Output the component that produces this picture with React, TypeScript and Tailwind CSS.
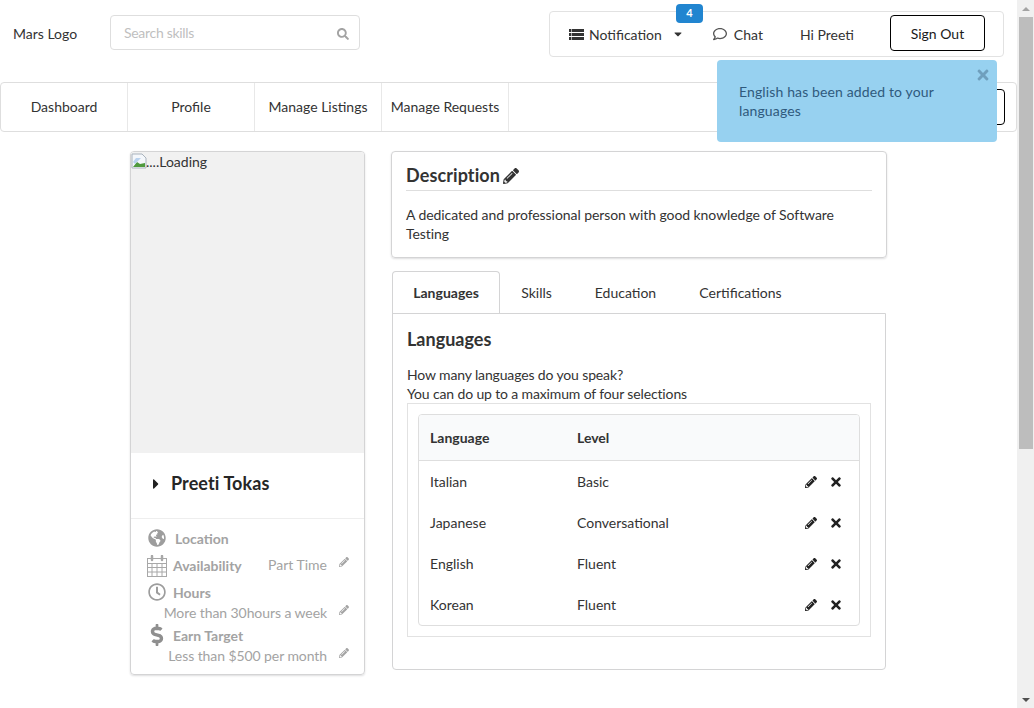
import {
  FaCaretDown,
  FaCaretRight,
  FaDollarSign,
  FaGlobeAmericas,
  FaPencilAlt,
  FaRegClock,
  FaRegComment,
  FaSearch,
  FaTimes,
} from 'react-icons/fa'

const languages = [
  { name: 'Italian', level: 'Basic' },
  { name: 'Japanese', level: 'Conversational' },
  { name: 'English', level: 'Fluent' },
  { name: 'Korean', level: 'Fluent' },
]

function ListIcon() {
  return (
    <svg width="15" height="11" viewBox="0 0 15 11" fill="#333" className="ml-[19px] shrink-0">
      <path d="M0 0h2.4v3H0zM3 0h12v3H3zM0 4h2.4v3H0zM3 4h12v3H3zM0 8h2.4v3H0zM3 8h12v3H3z" />
    </svg>
  )
}

function CalendarIcon() {
  return (
    <svg width="20" height="22" viewBox="0 0 20 22" fill="none" stroke="#a8a8a8" className="mt-[2px] shrink-0">
      <rect x="0.5" y="3.5" width="19" height="18" />
      <path d="M0 8.5h20M0 12.5h20M0 17h20M5 8v14M10 8v14M15 8v14" />
      <path d="M5 1v4M15 1v4" strokeWidth="2.5" strokeLinecap="round" />
    </svg>
  )
}

function Header() {
  return (
    <div className="flex h-[82px] items-start">
      <div className="ml-[13px] mt-[25px] w-[97px] leading-[18px]">Mars Logo</div>
      <div className="mt-[15px] flex h-[35px] w-[250px] items-center justify-between rounded border border-[#dedede] pl-[13px] pr-[10px]">
        <span className="tracking-[-0.3px] text-[#bfbfbf]">Search skills</span>
        <FaSearch className="mt-0.5 text-[12px] text-[#a3a3a3]" />
      </div>
      <div className="relative ml-[189px] mt-[11px] flex h-[46px] w-[455px] items-center rounded border border-[#e2e2e2]">
        <span className="absolute left-[126px] -top-[8px] flex h-[19px] w-[27px] items-center justify-center rounded bg-[#2185d0] text-[11px] font-bold text-white">
          4
        </span>
        <ListIcon />
        <span className="ml-[5px]">Notification</span>
        <FaCaretDown className="ml-[10px] text-[12px] text-[#333]" />
        <FaRegComment className="ml-[29px] text-[14px] text-[#555]" />
        <span className="ml-[7px]">Chat</span>
        <span className="ml-[37px]">Hi Preeti</span>
        <button className="mb-[2px] ml-[36px] h-[36px] w-[95px] rounded border border-black text-[#1a1a1a]">
          Sign Out
        </button>
      </div>
    </div>
  )
}

function NavBar() {
  return (
    <div className="relative flex h-[50px] rounded border border-[#dedede]">
      <div className="flex w-[127px] items-center justify-center border-r border-[#e8e8e8] pb-[2px]">Dashboard</div>
      <div className="flex w-[127px] items-center justify-center border-r border-[#e8e8e8] pb-[2px]">Profile</div>
      <div className="flex w-[127px] items-center justify-center border-r border-[#e8e8e8] pb-[2px]">Manage Listings</div>
      <div className="flex w-[127px] items-center justify-center border-r border-[#e8e8e8] pb-[2px]">Manage Requests</div>
      <span className="absolute left-[960px] top-[6px] h-[36px] w-[44px] rounded border border-black" />
    </div>
  )
}

function Toast() {
  return (
    <div className="absolute left-[717px] top-[60px] h-[82px] w-[280px] rounded bg-[#97d1f0] pl-[22px] pr-[40px] pt-[22px] leading-[19px] tracking-[0.13px] text-[#2f5a7d]">
      <FaTimes className="absolute right-[6px] top-[7px] text-[16px] text-[#6f9fbd]" />
      English has been added to your languages
    </div>
  )
}

function ProfileCard() {
  return (
    <div className="h-[524px] w-[235px] shrink-0 overflow-hidden rounded border border-[#d4d4d5] shadow-[0_1px_2px_rgba(34,36,38,0.15)]">
      <div className="flex h-[301px] items-start bg-[#f1f1f1] leading-[19px]">
        <svg width="16" height="16" viewBox="0 0 16 16" className="mt-px shrink-0">
          <path d="M1 1h10l4 4v10H1z" fill="#f4f7fb" stroke="#a9b3bd" />
          <path d="M2 14l4-5 3 2 5-1v4z" fill="#4f9a3e" />
          <path d="M2 9l3-4h5l-6 6z" fill="#b9d2ee" />
        </svg>
        <span className="-ml-px text-[#333]">....Loading</span>
      </div>
      <div className="flex h-[66px] items-center border-b border-[#eee] pb-[4px]">
        <FaCaretRight className="ml-[17px] text-[16px] text-[#222]" />
        <span className="ml-[7px] text-[18px] font-bold tracking-[0.1px] text-[#262626]">Preeti Tokas</span>
      </div>
      <div className="flex flex-col pl-[16px] pr-[15px] pt-[8px] text-[#a3a3a3]">
        <div className="flex h-[22px] items-center">
          <FaGlobeAmericas className="ml-px text-[18px] text-[#9d9d9d]" />
          <span className="ml-[9px] font-bold">Location</span>
        </div>
        <div className="mt-[3px] flex h-[26px] items-center">
          <CalendarIcon />
          <span className="ml-[6px] font-bold">Availability</span>
          <span className="relative -top-px ml-auto">Part Time</span>
          <FaPencilAlt className="relative -top-[3px] ml-[12px] text-[10px]" />
        </div>
        <div className="mt-[3px] flex h-[22px] items-center">
          <FaRegClock className="ml-px text-[18px] text-[#9d9d9d]" />
          <span className="ml-[7px] font-bold">Hours</span>
        </div>
        <div className="flex h-[19px] items-center justify-end">
          <span className="tracking-[-0.08px]">More than 30hours a week</span>
          <FaPencilAlt className="relative -top-[3px] ml-[12px] text-[10px]" />
        </div>
        <div className="mt-[2px] flex h-[22px] items-center">
          <FaDollarSign className="-ml-px text-[22px] text-[#8f8f8f]" />
          <span className="ml-[5px] font-bold">Earn Target</span>
        </div>
        <div className="flex h-[19px] items-center justify-end">
          <span className="tracking-[-0.08px]">Less than $500 per month</span>
          <FaPencilAlt className="relative -top-[3px] ml-[12px] text-[10px]" />
        </div>
      </div>
    </div>
  )
}

function Description() {
  return (
    <div className="h-[107px] rounded border border-[#d4d4d5] px-[14px] shadow-[0_1px_2px_rgba(34,36,38,0.15)]">
      <div className="flex h-[39px] items-center border-b border-[#dedede] pt-[9px]">
        <h3 className="text-[18px] font-bold tracking-[0.1px] text-[#333]">Description</h3>
        <FaPencilAlt className="ml-[3px] text-[16px] text-[#333]" />
      </div>
      <p className="mt-[14px] leading-[19px] tracking-[-0.07px] text-[#333]">
        A dedicated and professional person with good knowledge of Software Testing
      </p>
    </div>
  )
}

function LanguagesTab() {
  return (
    <div className="ml-px mt-[13px] w-[494px]">
      <div className="flex h-[43px] items-stretch">
        <div className="relative z-10 flex h-[43px] w-[108px] items-center justify-center rounded-t border border-b-0 border-[#d4d4d5] pb-[2px] font-bold text-[#333]">
          Languages
        </div>
        <div className="flex w-[73px] items-center justify-center text-[#333]">Skills</div>
        <div className="flex w-[105px] items-center justify-center text-[#333]">Education</div>
        <div className="flex w-[125px] items-center justify-center text-[#333]">Certifications</div>
      </div>
      <div className="-mt-px h-[357px] rounded-b border border-[#d4d4d5] px-[14px] pt-[14px]">
        <h3 className="text-[18px] font-bold leading-[22px] text-[#333]">Languages</h3>
        <p className="mt-[15px] leading-[19px] tracking-[-0.14px] text-[#333]">
          How many languages do you speak?
          <br />
          You can do up to a maximum of four selections
        </p>
        <div className="h-[234px] border border-[#e2e2e2] px-[10px] pt-[10px]">
          <div className="h-[212px] overflow-hidden rounded border border-[#dedede]">
            <div className="flex h-[46px] items-center border-b border-[#dedede] bg-[#f9fafb] font-bold text-[#333]">
              <span className="ml-[11px] w-[147px]">Language</span>
              <span>Level</span>
            </div>
            {languages.map((row) => (
              <div key={row.name} className="flex h-[41px] items-center text-[#333]">
                <span className="ml-[11px] w-[147px]">{row.name}</span>
                <span>{row.level}</span>
                <FaPencilAlt className="ml-auto text-[12px] text-[#222]" />
                <FaTimes className="ml-[12px] mr-[16px] text-[14px] text-[#222]" />
              </div>
            ))}
          </div>
        </div>
      </div>
    </div>
  )
}

function Scrollbar() {
  return (
    <div className="flex h-[708px] w-[17px] shrink-0 flex-col items-center bg-[#f0f0f0]">
      <div className="flex h-[17px] items-center justify-center">
        <span className="h-0 w-0 border-x-[4px] border-b-[4px] border-x-transparent border-b-[#a3a3a3]" />
      </div>
      <div className="h-[432px] w-[14px] bg-[#bdbdbd]" />
      <div className="mt-auto flex h-[17px] items-center justify-center">
        <span className="h-0 w-0 border-x-[4px] border-t-[4px] border-x-transparent border-t-[#505050]" />
      </div>
    </div>
  )
}

export default function App() {
  return (
    <div className="relative flex h-[708px] w-[1034px] overflow-hidden bg-white font-['Lato',sans-serif] text-[14px] text-[#333]">
      <div className="w-[1017px] shrink-0">
        <Header />
        <NavBar />
        <div className="ml-[130px] mt-[19px] flex gap-[26px]">
          <ProfileCard />
          <div className="w-[496px]">
            <Description />
            <LanguagesTab />
          </div>
        </div>
      </div>
      <Scrollbar />
      <Toast />
    </div>
  )
}
